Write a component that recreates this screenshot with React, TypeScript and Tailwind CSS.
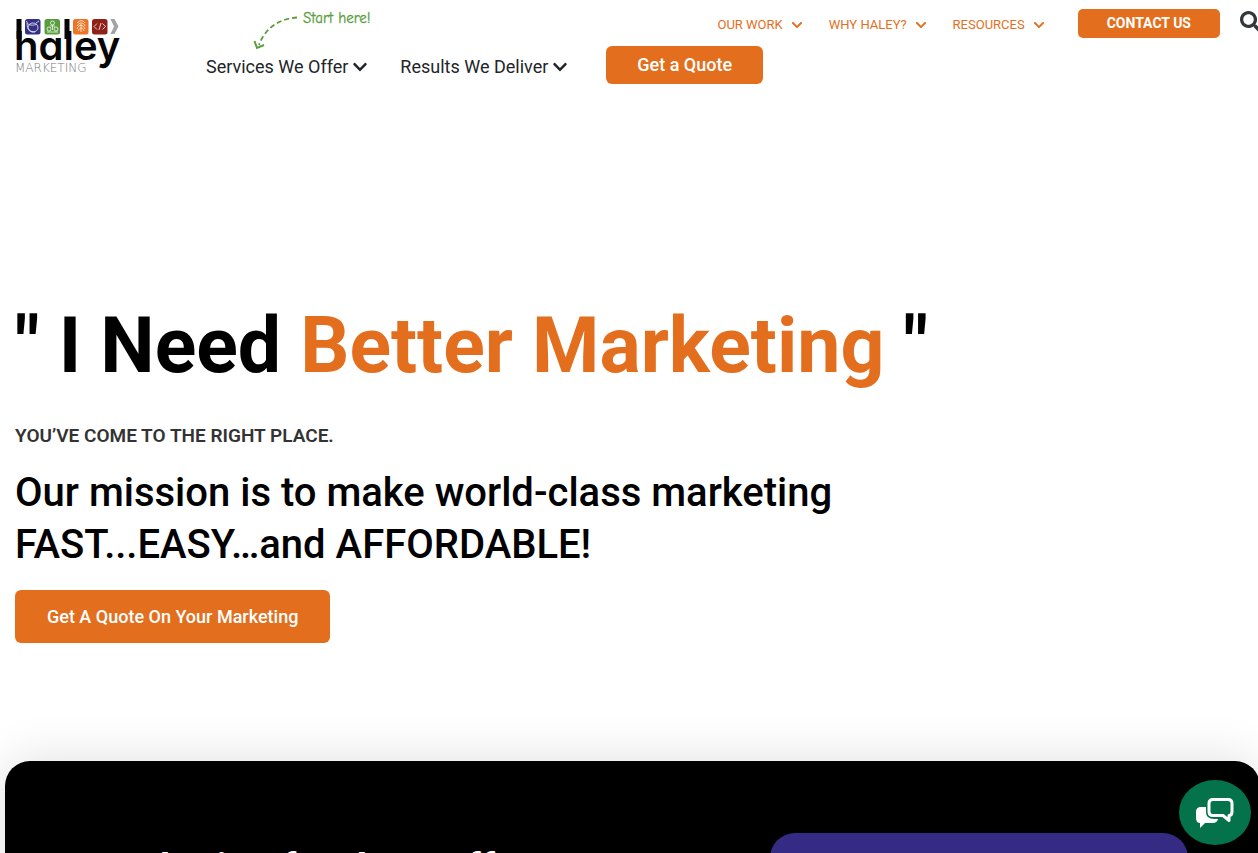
import { FaChevronDown, FaSearch } from "react-icons/fa";

const topLinks = ["OUR WORK", "WHY HALEY?", "RESOURCES"];
const mainLinks = ["Services We Offer", "Results We Deliver"];

const Logo = () => (
  <svg viewBox="0 0 104 56" className="h-14 w-26 overflow-visible" role="img" aria-label="haley marketing">
    <text
      x="-2"
      y="42"
      fontSize="40"
      fill="#050505"
      className="font-['Inter',sans-serif] font-semibold [font-feature-settings:'cv11']"
    >
      haley
    </text>
    <rect x="0.500" y="1" width="5" height="20" fill="#050505" />
    <rect x="48.500" y="1" width="5" height="20" fill="#050505" />
    <rect x="9" y="1" width="15.500" height="15.500" rx="2.500" fill="#343085" />
    <rect x="28.500" y="1" width="15.500" height="15.500" rx="2.500" fill="#5a9d3c" />
    <rect x="57" y="1" width="15.500" height="15.500" rx="2.500" fill="#ee7425" />
    <rect x="76" y="1" width="15.500" height="15.500" rx="2.500" fill="#8f2218" />
    <g fill="none" stroke="#fff" strokeOpacity="0.750" strokeWidth="1">
      <ellipse cx="17" cy="9.500" rx="5" ry="4.500" />
      <path d="M10.500 3c1 4 4 5 10 3.500M11 5c0 6 3 9 8 9M20 5l3-2" />
      <circle cx="36.500" cy="5" r="2" />
      <circle cx="33" cy="11" r="2" />
      <circle cx="40" cy="11" r="2" />
      <path d="M31 14h11M36.500 7v5M34 8h5" />
      <path d="M61 5c3-3 6-3 8 0M61 8c2-4 7-4 8 0M61 11c2-5 6-5 8 0M62 13c2-4 5-4 6 0M65 6v8" />
      <path d="M81 5.500l-3 3 3 3M86.500 5.500l3 3-3 3M85 5l-2 7" />
    </g>
    <path d="M94.500 1h4l4 7.500-4 7.500h-4l3.500-7.500z" fill="#a1a3a6" />
    <text x="-1" y="54" fontSize="12" fill="#77797c" className="font-['DejaVu_Sans',sans-serif] font-extralight">
      MARKETING
    </text>
  </svg>
);

const StartHere = () => (
  <svg viewBox="0 0 120 44" className="h-11 w-30 overflow-visible" role="img" aria-label="Start here!">
    <path d="M45 9.500C26 10.500 12 22 7 37" fill="none" stroke="#5a9d3c" strokeWidth="1.800" strokeDasharray="5 3" />
    <path d="M2.500 33l2.500 7 7-3" fill="none" stroke="#5a9d3c" strokeWidth="2" />
    <text
      x="51"
      y="15"
      fontSize="15"
      fill="#5a9d3c"
      stroke="#5a9d3c"
      strokeWidth="0.300"
      fontFamily="'Comic Neue', 'Comic Sans MS', 'Open Sans', cursive"
    >
      Start here!
    </text>
  </svg>
);

const ChatIcon = () => (
  <svg viewBox="0 0 38 30" className="h-[30px] w-[38px]" aria-hidden="true">
    <path d="M10 9H5Q0 9 0 14v6q0 5 4 5v5l5-5h8q4 0 5-4h-4q-8 0-8-7z" fill="#fff" />
    <path
      d="M17 1.500h15q4 0 4 4v8q0 4-3 4v5l-6-5H17q-4 0-4-4v-8q0-4 4-4z"
      fill="none"
      stroke="#fff"
      strokeWidth="3"
      strokeLinejoin="round"
    />
  </svg>
);

const App = () => {
  return (
    <div className="relative h-screen overflow-hidden bg-white font-['Roboto',sans-serif] text-black">
      <header className="flex h-[92px] items-start pl-4">
        <a href="#" className="mt-[18px] shrink-0">
          <Logo />
        </a>
        <div className="relative ml-[86px] flex shrink-0 items-start pt-[46px]">
          <div className="absolute top-2 left-[46px]">
            <StartHere />
          </div>
          <nav className="flex gap-8 pt-[9px]">
            {mainLinks.map((label) => (
              <button key={label} className="flex items-center gap-1 text-lg leading-6 text-[#212529]">
                {label}
                <FaChevronDown size={16} />
              </button>
            ))}
          </nav>
          <a
            href="#"
            className="ml-[38px] rounded-md bg-[#e36f1e] px-[31px] text-lg leading-[38px] font-medium text-white"
          >
            Get a Quote
          </a>
        </div>
        <div className="-mr-[3px] -ml-14 flex flex-1 shrink-0 items-start justify-end pt-[9px]">
          <nav className="flex gap-[26px] pt-1.5">
            {topLinks.map((label) => (
              <button
                key={label}
                className="flex items-center gap-2 text-[13px] leading-5 whitespace-nowrap text-[#e36f1e]"
              >
                {label}
                <FaChevronDown size={12} />
              </button>
            ))}
          </nav>
          <a
            href="#"
            className="ml-[33px] rounded-[5px] bg-[#e36f1e] px-[29px] text-sm leading-[29px] font-bold whitespace-nowrap text-white"
          >
            CONTACT US
          </a>
          <button aria-label="Search" className="mt-0.5 ml-5 shrink-0 text-[#32373c]">
            <FaSearch size={21} />
          </button>
        </div>
      </header>

      <main>
        <section className="px-[15px] pt-[209px]">
          <h1 className="text-[77px] leading-[90px] font-bold">
            &quot; I Need <span className="text-[#e36f1e]">Better Marketing</span> &quot;
          </h1>
          <p className="mt-[33px] text-[19px] leading-6 font-semibold text-[#333]">YOU’VE COME TO THE RIGHT PLACE.</p>
          <h2 className="mt-[19px] text-[40px] leading-[52px] font-medium">
            Our mission is to make world-class marketing
            <br />
            FAST...EASY…and AFFORDABLE!
          </h2>
          <a
            href="#"
            className="mt-[19px] inline-block rounded-md bg-[#e36f1e] px-8 text-lg leading-[53px] font-medium text-white"
          >
            Get A Quote On Your Marketing
          </a>
        </section>

        <section className="mt-[118px] -mr-0.5 ml-[5px] flex justify-between rounded-[25px] bg-black pt-[72px] pr-[72px] pb-16 pl-[84px] text-white shadow-[0_0_50px_rgba(0,0,0,0.13)]">
          <h2 className="pt-[10px] text-[40px] leading-[52px] font-bold">Marketing for the staffer</h2>
          <div className="w-[418px] rounded-[25px] bg-[#352b85] pt-[15px] pb-10 text-center text-[28px] leading-8 font-medium">
            Join Us
          </div>
        </section>
      </main>

      <button
        aria-label="Chat"
        className="absolute right-[7px] bottom-2 flex h-[65px] w-[72px] items-center justify-center rounded-[50%] bg-[#04724a]"
      >
        <ChatIcon />
      </button>
    </div>
  );
};

export default App;
